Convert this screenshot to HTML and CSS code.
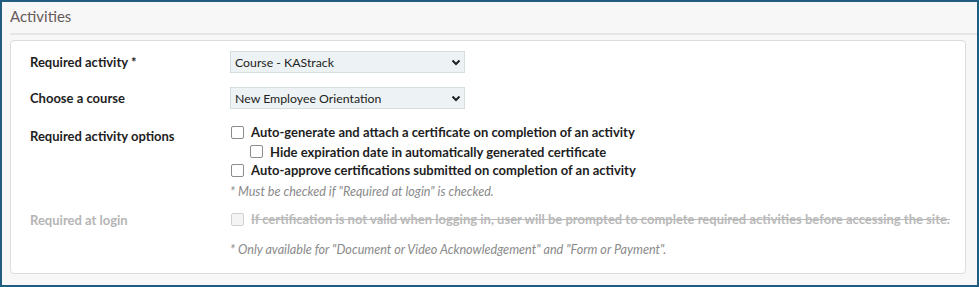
FILE: index.html
```html
<!DOCTYPE html>
<html>
<head>
<meta charset="utf-8">
<link rel="stylesheet" href="styles.css">
</head>
<body>
<div class="frame">
  <div class="panel-head">Activities</div>
  <div class="card">
    <div class="row row-select">
      <div class="label">Required activity *</div>
      <div class="control">
        <div class="select"><span>Course - KAStrack</span><svg class="chev" width="10" height="7" viewBox="0 0 10 7"><path d="M1.5 1.5 L5 5 L8.5 1.5" fill="none" stroke="#222" stroke-width="2"/></svg></div>
      </div>
    </div>
    <div class="row row-select">
      <div class="label">Choose a course</div>
      <div class="control">
        <div class="select"><span>New Employee Orientation</span><svg class="chev" width="10" height="7" viewBox="0 0 10 7"><path d="M1.5 1.5 L5 5 L8.5 1.5" fill="none" stroke="#222" stroke-width="2"/></svg></div>
      </div>
    </div>
    <div class="row row-options">
      <div class="label">Required activity options</div>
      <div class="control">
        <div class="check first"><span class="box"></span><span class="ctext">Auto-generate and attach a certificate on completion of an activity</span></div>
        <div class="check sub"><span class="box"></span><span class="ctext">Hide expiration date in automatically generated certificate</span></div>
        <div class="check third"><span class="box"></span><span class="ctext">Auto-approve certifications submitted on completion of an activity</span></div>
        <div class="note">* Must be checked if "Required at login" is checked.</div>
      </div>
    </div>
    <div class="row row-login">
      <div class="label disabled">Required at login</div>
      <div class="control">
        <div class="check off"><span class="box"></span><span class="ctext">If certification is not valid when logging in, user will be prompted to complete required activities before accessing the site.</span></div>
        <div class="note note2">* Only available for "Document or Video Acknowledgement" and "Form or Payment".</div>
      </div>
    </div>
  </div>
</div>
</body>
</html>
```
FILE: styles.css
```css
html, body {
  margin: 0;
  padding: 0;
  background: #f7f7f7;
}
.frame {
  width: 979px;
  height: 287px;
  box-sizing: border-box;
  border: 2px solid #205d80;
  background: #f7f7f7;
  font-family: Lato, "Noto Sans", sans-serif;
  color: #222;
}
.panel-head {
  margin-left: 8px;
  height: 31px;
  line-height: 29px;
  font-size: 15px;
  color: #675a5a;
  border-bottom: 2px solid #e6e6e6;
}
.card {
  margin: 5px 0 0 8px;
  width: 956px;
  height: 234px;
  box-sizing: border-box;
  background: #fff;
  border: 1px solid #dcdcdc;
  border-radius: 4px;
  padding: 10px 0 0 19px;
}
.row {
  display: grid;
  grid-template-columns: 200px 1fr;
}
.label {
  font-weight: bold;
  font-size: 13px;
  color: #1e1e1e;
}
.label.disabled { color: #b5b5b5; }
.row-select { height: 36px; align-items: start; }
.row-select .label { line-height: 22px; }
.select {
  width: 235px;
  height: 22px;
  box-sizing: border-box;
  background: #edf2f4;
  border: 1px solid #d6dde0;
  display: flex;
  align-items: center;
  justify-content: space-between;
  padding: 0 3px 0 4px;
  font-size: 12.3px;
  color: #222;
}
.chev { display: block; }
.row-options .label { line-height: 16px; padding-top: 5px; }
.check {
  display: flex;
  align-items: center;
  height: 18px;
  font-weight: bold;
  font-size: 13px;
  color: #1e1e1e;
}
.check.first { margin-top: -1px; height: 20px; }
.check.sub { padding-left: 19px; height: 19px; }
.box {
  width: 11px;
  height: 11px;
  border: 1px solid #8c8c8c;
  border-radius: 2px;
  background: #fff;
  margin-left: 1px;
  margin-right: 7px;
  flex: none;
}
.note {
  font-style: italic;
  font-size: 12.6px;
  color: #8a8a8a;
  margin-top: 4px;
  height: 18px;
  line-height: 18px;
}
.row-login { margin-top: 9px; }
.row-login .label { line-height: 18px; padding-top: 1px; }
.check.off { color: #b9b9b9; }
.check.off .box { border-color: #d0d0d0; background: #f4f4f4; }
.check.off .ctext { text-decoration: line-through; }
.note2 { margin-top: 13px; }
```
